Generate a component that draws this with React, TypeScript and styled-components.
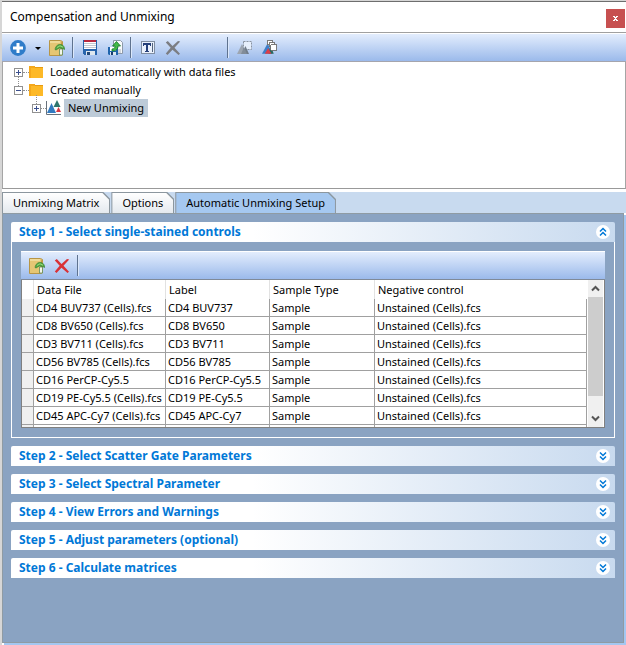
import React, { useState } from "react";
import styled, { createGlobalStyle, css } from "styled-components";

const GlobalStyle = createGlobalStyle`
  *, *::before, *::after { box-sizing: border-box; }
  body { margin: 0; background: #fff; }
  body, button, table {
    font-family: "Noto Sans", "Open Sans", sans-serif;
    font-size: 11px;
    line-height: 18px;
    color: #000;
  }
  button { margin: 0; padding: 0; border: 0; background: none; }
`;

const Window = styled.main`
  display: flex;
  flex-direction: column;
  min-height: 100vh;
  border-left: 2px solid #d6d6d6;
  border-top: 1px solid #d6d6d6;
  background: #fff;
`;

const TitleBar = styled.header`
  display: flex;
  justify-content: space-between;
  align-items: center;
  height: 32px;
  padding-left: 8px;
  border-top: 1px solid #6e6e6e;
  border-bottom: 1px solid #a0a0a0;
`;

const Title = styled.h1`
  margin: 0;
  font-size: 12px;
  font-weight: 400;
`;

const CloseButton = styled.button`
  display: flex;
  align-items: center;
  justify-content: center;
  width: 19px;
  height: 19px;
  margin-right: 1px;
  margin-top: 3px;
  background: #c75050;
`;

const Toolbar = styled.div`
  display: flex;
  align-items: center;
  height: 29px;
  padding-left: 8px;
  border-top: 1px solid #fff;
  border-bottom: 1px solid #a5a5ad;
  background: linear-gradient(#e3edfd, #9bbaeb);
`;

const GridToolbar = styled(Toolbar)`
  border-bottom-color: #808a98;
`;

const ToolButton = styled.button<{ $gap?: number }>`
  display: flex;
  width: 16px;
  height: 16px;
  margin-right: ${(p) => p.$gap ?? 9}px;
`;

const Separator = styled.span`
  width: 2px;
  height: 21px;
  margin-right: 8px;
  border-left: 1px solid #5f738f;
  border-right: 1px solid #dbe8fb;
`;

const Spacer = styled.span`
  width: 37px;
`;

const TreePane = styled.section`
  height: 127px;
  padding: 1px 0 0 11px;
  border: 1px solid #a5a5a5;
  border-top: 0;
  border-bottom-color: #999;
`;

const TreeList = styled.ul<{ $nested?: boolean }>`
  margin: 0;
  padding: 0 0 0 ${(p) => (p.$nested ? "18px" : "0")};
  list-style: none;
`;

const TreeRow = styled.div`
  display: flex;
  align-items: center;
  height: 18px;
`;

const Expander = styled.button<{ $linkDown?: boolean; $linkUp?: boolean }>`
  position: relative;
  display: flex;
  width: 9px;
  height: 9px;

  ${(p) =>
    (p.$linkDown || p.$linkUp) &&
    css`
      &::after {
        content: "";
        position: absolute;
        left: 4px;
        ${p.$linkDown ? "top: 9px;" : "bottom: 9px;"}
        height: 9px;
        border-left: 1px dotted #909090;
      }
    `}
`;

const Dots = styled.span<{ $short?: boolean }>`
  width: ${(p) => (p.$short ? "5px" : "6px")};
  border-top: 1px dotted #909090;
`;

const TreeLabel = styled.span<{ $selected?: boolean }>`
  margin-left: 2px;
  padding: 0 4px;
  background: ${(p) => (p.$selected ? "#bdcbd8" : "transparent")};
`;

const TabBar = styled.div`
  display: flex;
  height: 21px;
  margin-top: 3px;
  gap: 1px;
  background: #c8daef;
`;

const tabShape = css`
  clip-path: polygon(0 0, calc(100% - 7px) 0, 100% 7px, 100% 100%, 0 100%);
`;

const Tab = styled.button<{ $active?: boolean }>`
  position: relative;
  z-index: 0;
  padding: 2px 11px 1px;
  background: #8c979f;
  ${tabShape}

  &::before {
    content: "";
    position: absolute;
    z-index: -1;
    inset: 1px 1px 0 1px;
    background: ${(p) => (p.$active ? "#a5c8f0" : "linear-gradient(#fff, #e4e9ee)")};
    ${tabShape}
  }
`;

const Panel = styled.div`
  display: flex;
  flex-direction: column;
  flex: 1;
  gap: 8px;
  margin: 0 2px 2px 0;
  padding: 8px 8px 8px 8px;
  border: 1px solid #8f9ba3;
  background: #8aa3c2;
  box-shadow: 2px 2px 0 #a3c7f1;
`;

const StepHeading = styled.h2`
  margin: 0;
`;

const StepButton = styled.button`
  display: flex;
  align-items: center;
  justify-content: space-between;
  width: 100%;
  height: 20px;
  padding: 0 5px 0 8px;
  border-radius: 2px 2px 0 0;
  background: linear-gradient(90deg, #fff 40%, #c8daef);
  font-size: 12px;
  font-weight: 700;
  color: #0078d7;
`;

const StepBody = styled.div`
  padding: 9px;
  border: 1px solid #fff;
  border-top: 0;
`;

const GridFrame = styled.div`
  display: flex;
  height: 148px;
  border: 1px solid #808080;
  border-top: 0;
  background: #fff;
`;

const GridView = styled.div`
  flex: 1;
  overflow: hidden;
  padding-right: 1px;
`;

const Grid = styled.table`
  width: 100%;
  table-layout: fixed;
  border-collapse: separate;
  border-spacing: 0;
`;

const Col = styled.col<{ $width?: number }>`
  width: ${(p) => (p.$width ? `${p.$width}px` : "auto")};
`;

const HeadCell = styled.th`
  height: 19px;
  padding: 0 3px;
  border-right: 1px solid #e2e2e2;
  font-weight: 400;
  text-align: left;
  white-space: nowrap;

  &:last-child { border-right-color: transparent; }
`;

const Cell = styled.td`
  height: 18px;
  padding: 0 2px;
  border-right: 1px solid #a0a0a0;
  border-bottom: 1px solid #a0a0a0;
  line-height: 17px;
  white-space: nowrap;
`;

const RowHead = styled(Cell)`
  background: #f0f0f0;
`;

const ScrollTrack = styled.div`
  display: flex;
  flex-direction: column;
  width: 16px;
  padding-right: 1px;
  background: linear-gradient(90deg, #f0f0f0 15px, #fff 15px);
`;

const ScrollButton = styled.button`
  display: flex;
  align-items: center;
  justify-content: center;
  height: 17px;
`;

const ScrollThumb = styled.div`
  height: 99px;
  margin-bottom: auto;
  background: #cdcdcd;
`;

const PlusIcon = () => (
  <svg width="16" height="16" viewBox="0 0 16 16">
    <circle cx="8" cy="8" r="7.900" fill="#2f7cc9" />
    <path d="M8 3v10M3 8h10" stroke="#fff" strokeWidth="3" />
  </svg>
);

const CaretIcon = () => (
  <svg width="16" height="16" viewBox="0 0 16 16">
    <path d="M0 7h6L3 10z" fill="#000" />
  </svg>
);

const ImportIcon = () => (
  <svg width="16" height="16" viewBox="0 0 16 16">
    <path d="M.5 .5h11l2 1v13l-2 1H.5z" fill="#e5c674" stroke="#b79546" />
    <path d="M1 1h10v2H1z" fill="#f0da98" />
    <path d="M12 2l2 1v12l-2 .5z" fill="#c49b45" />
    <path d="M10.500 15V9h3v6z" fill="#f3f6e9" stroke="#628b55" strokeWidth=".8" />
    <path d="M6 9.500C6.500 6 9 4 12 4.500 14.500 5 15.500 7 15.700 9.500L13.500 8.500l-3.200-.5L7 10z" fill="#54a944" stroke="#287b2b" strokeWidth=".6" />
    <path d="M8 7.500l3-1.700 3 1.400" stroke="#9bd77f" fill="none" />
  </svg>
);

const SaveIcon = () => (
  <svg width="16" height="16" viewBox="0 0 16 16" shapeRendering="crispEdges">
    <path d="M1 0h14v15H2l-1-1z" fill="#2764ad" />
    <path d="M2 0h12v9H2z" fill="#fff" />
    <path d="M2 0h12v2H2z" fill="#b92a40" />
    <path d="M2 3h12M2 5h12M2 7h12" stroke="#c3c8d0" transform="translate(0 .5)" />
    <path d="M4 11h9v4H4z" fill="#dfe7ee" />
    <path d="M5 12h3v3H5z" fill="#244878" />
  </svg>
);

const ExportIcon = () => (
  <svg width="16" height="16" viewBox="0 0 16 16">
    <path d="M6.500 .5h7l2 2v11h-9z" fill="#f7f9fb" stroke="#8d99aa" />
    <path d="M11 10h3M11 12h3" stroke="#aab3be" />
    <path d="M1 7h10v8H2l-1-1z" fill="#1f64ad" />
    <path d="M3 7h6v4H3z" fill="#fff" />
    <path d="M3 12h6v3H3z" fill="#dbe7ef" />
    <path d="M4 12h2v3H4z" fill="#183d70" />
    <path d="M5 11C9.500 11 11 9 11 6H13.500L9.500 1.500 5.500 6H8C8 8 7 9 5 9z" fill="#43b947" stroke="#14772d" strokeWidth=".8" />
  </svg>
);

const RenameIcon = () => (
  <svg width="16" height="16" viewBox="0 0 16 16" shapeRendering="crispEdges">
    <path d="M1.500 1.500h13v12h-13z" fill="#eaf1fc" stroke="#7f8da1" />
    <path d="M3 3h8v3h-1V5H8v6h1v1H5v-1h1V5H4v1H3z" fill="#253f79" />
    <path d="M12.500 3v9" stroke="#53647e" />
  </svg>
);

const CrossIcon = ({ red }: { red?: boolean }) => (
  <svg width="16" height="16" viewBox="0 0 16 16">
    <path
      d="M.8 2.500L2.800 1 7.500 6 13 1l2.200.5L9.500 7.700 15 13.800 13.500 15 7.500 9.700 2.500 15 .8 13.500 5.700 7.800z"
      fill={red ? "#d93136" : "#7b7d82"}
    />
  </svg>
);

const GateIcon = () => (
  <svg width="16" height="16" viewBox="0 0 16 16">
    <path d="M0 14L5 4l5 10z" fill="#9ca5b1" />
    <path d="M6.500 1.500h8v8h-8z" fill="#e6effc" stroke="#8993a1" strokeDasharray="2 1" />
    <path d="M5 14l3.500-8 3.500 8z" fill="#707c8a" />
    <path d="M4 14l3-7 3 7z" fill="#818c99" />
  </svg>
);

const GateStackIcon = () => (
  <svg width="17" height="16" viewBox="0 0 17 16">
    <path d="M0 14L6 3l5 11z" fill="#3d7fc9" />
    <path d="M7 14l2-9 3.500 9z" fill="#27695e" />
    <g fill="#fff" stroke="#737373" shapeRendering="crispEdges">
      <path d="M5.500 .5h6v4h-6z" />
      <path d="M7.500 2.500h6v4h-6z" />
      <path d="M9.500 4.500h6v6h-6z" />
    </g>
    <path d="M3 14l3.500-6L10 14z" fill="#dc3e48" />
  </svg>
);

const BoxIcon = ({ open }: { open?: boolean }) => (
  <svg width="9" height="9" viewBox="0 0 9 9" shapeRendering="crispEdges">
    <path d="M.5 .5h8v8h-8z" fill="#fff" stroke="#919191" />
    <path d={open ? "M2 4.500h5" : "M2 4.500h5M4.500 2v5"} stroke="#3b4f8d" />
  </svg>
);

const FolderIcon = () => (
  <svg width="15" height="14" viewBox="0 0 15 14" shapeRendering="crispEdges">
    <path d="M0 1h6v1h8v11H0z" fill="#fdb927" />
    <path d="M0 1h6v2H2v10H0z" fill="#f5a81c" />
    <path d="M6 2h8v1H6z" fill="#e79b11" />
  </svg>
);

const MatrixIcon = () => (
  <svg width="16" height="16" viewBox="0 0 16 16">
    <path d="M1 13L5.500 3 10 13z" fill="#327ac0" />
    <path d="M7.500 7L11 0l3.500 7z" fill="#2d756d" />
    <path d="M10 12l2.500-5 2.500 5z" fill="#da3844" />
    <path d="M.5 1v13.500H15" stroke="#68727c" fill="none" />
  </svg>
);

const ChevronBadge = ({ up }: { up?: boolean }) => (
  <svg width="14" height="14" viewBox="0 0 14 14">
    <circle cx="7" cy="7" r="7" fill="#fff" />
    <path
      d={up ? "M4 6.500l3-3 3 3M4 10.500l3-3 3 3" : "M4 3.500l3 3 3-3M4 7.500l3 3 3-3"}
      fill="none"
      stroke="#0078d7"
      strokeWidth="1.500"
    />
  </svg>
);

const ScrollArrow = ({ down }: { down?: boolean }) => (
  <svg width="9" height="7" viewBox="0 0 9 7">
    <path d={down ? "M1 1.500l3.500 3.500L8 1.500" : "M1 5.500L4.500 2 8 5.500"} fill="none" stroke="#555" strokeWidth="2" />
  </svg>
);

const CloseIcon = () => (
  <svg width="5" height="5" viewBox="0 0 5 5" shapeRendering="crispEdges">
    <path d="M0 0h2v1h1V0h2v1H4v1H3v1h1v1h1v1H3V4H2v1H0V4h1V3h1V2H1V1H0z" fill="#fff" />
  </svg>
);

const controls = [
  ["CD4 BUV737 (Cells).fcs", "CD4 BUV737"],
  ["CD8 BV650 (Cells).fcs", "CD8 BV650"],
  ["CD3 BV711 (Cells).fcs", "CD3 BV711"],
  ["CD56 BV785 (Cells).fcs", "CD56 BV785"],
  ["CD16 PerCP-Cy5.5", "CD16 PerCP-Cy5.5"],
  ["CD19 PE-Cy5.5 (Cells).fcs", "CD19 PE-Cy5.5"],
  ["CD45 APC-Cy7 (Cells).fcs", "CD45 APC-Cy7"],
];

const steps = [
  "Step 1 - Select single-stained controls",
  "Step 2 - Select Scatter Gate Parameters",
  "Step 3 - Select Spectral Parameter",
  "Step 4 - View Errors and Warnings",
  "Step 5 - Adjust parameters (optional)",
  "Step 6 - Calculate matrices",
];

const tabs = ["Unmixing Matrix", "Options", "Automatic Unmixing Setup"];

const ControlsTable = () => (
  <StepBody>
    <GridToolbar>
      <ToolButton aria-label="Add controls">
        <ImportIcon />
      </ToolButton>
      <ToolButton aria-label="Remove control" $gap={7}>
        <CrossIcon red />
      </ToolButton>
      <Separator />
    </GridToolbar>
    <GridFrame>
      <GridView>
        <Grid>
          <colgroup>
            <Col $width={12} />
            <Col $width={132} />
            <Col $width={104} />
            <Col $width={105} />
            <Col />
          </colgroup>
          <thead>
            <tr>
              <HeadCell aria-label="Row" />
              <HeadCell>Data File</HeadCell>
              <HeadCell>Label</HeadCell>
              <HeadCell>Sample Type</HeadCell>
              <HeadCell>Negative control</HeadCell>
            </tr>
          </thead>
          <tbody>
            {controls.map(([file, label]) => (
              <tr key={file}>
                <RowHead />
                <Cell>{file}</Cell>
                <Cell>{label}</Cell>
                <Cell>Sample</Cell>
                <Cell>Unstained (Cells).fcs</Cell>
              </tr>
            ))}
            <tr>
              <RowHead />
              <Cell />
              <Cell />
              <Cell />
              <Cell />
            </tr>
          </tbody>
        </Grid>
      </GridView>
      <ScrollTrack>
        <ScrollButton aria-label="Scroll up">
          <ScrollArrow />
        </ScrollButton>
        <ScrollThumb />
        <ScrollButton aria-label="Scroll down">
          <ScrollArrow down />
        </ScrollButton>
      </ScrollTrack>
    </GridFrame>
  </StepBody>
);

export default function App() {
  const [openStep, setOpenStep] = useState(0);
  const [activeTab, setActiveTab] = useState(2);

  return (
    <Window>
      <GlobalStyle />
      <TitleBar>
        <Title>Compensation and Unmixing</Title>
        <CloseButton aria-label="Close">
          <CloseIcon />
        </CloseButton>
      </TitleBar>
      <Toolbar>
        <ToolButton aria-label="New">
          <PlusIcon />
        </ToolButton>
        <ToolButton aria-label="New options" $gap={-2}>
          <CaretIcon />
        </ToolButton>
        <ToolButton aria-label="Import" $gap={7}>
          <ImportIcon />
        </ToolButton>
        <Separator />
        <ToolButton aria-label="Save">
          <SaveIcon />
        </ToolButton>
        <ToolButton aria-label="Export" $gap={7}>
          <ExportIcon />
        </ToolButton>
        <Separator />
        <ToolButton aria-label="Rename">
          <RenameIcon />
        </ToolButton>
        <ToolButton aria-label="Delete">
          <CrossIcon />
        </ToolButton>
        <Spacer />
        <Separator />
        <ToolButton aria-label="Apply to selection">
          <GateIcon />
        </ToolButton>
        <ToolButton aria-label="Apply to all">
          <GateStackIcon />
        </ToolButton>
      </Toolbar>
      <TreePane aria-label="Matrices">
        <TreeList>
          <li>
            <TreeRow>
              <Expander aria-label="Expand" $linkDown>
                <BoxIcon />
              </Expander>
              <Dots />
              <FolderIcon />
              <TreeLabel>Loaded automatically with data files</TreeLabel>
            </TreeRow>
          </li>
          <li>
            <TreeRow>
              <Expander aria-label="Collapse">
                <BoxIcon open />
              </Expander>
              <Dots />
              <FolderIcon />
              <TreeLabel>Created manually</TreeLabel>
            </TreeRow>
            <TreeList $nested>
              <li>
                <TreeRow>
                  <Expander aria-label="Expand" $linkUp>
                    <BoxIcon />
                  </Expander>
                  <Dots $short />
                  <MatrixIcon />
                  <TreeLabel $selected>New Unmixing</TreeLabel>
                </TreeRow>
              </li>
            </TreeList>
          </li>
        </TreeList>
      </TreePane>
      <TabBar role="tablist">
        {tabs.map((name, i) => (
          <Tab
            key={name}
            role="tab"
            aria-selected={i === activeTab}
            $active={i === activeTab}
            onClick={() => setActiveTab(i)}
          >
            {name}
          </Tab>
        ))}
      </TabBar>
      <Panel>
        {steps.map((title, i) => (
          <section key={title}>
            <StepHeading>
              <StepButton aria-expanded={i === openStep} onClick={() => setOpenStep(i === openStep ? -1 : i)}>
                {title}
                <ChevronBadge up={i === openStep} />
              </StepButton>
            </StepHeading>
            {i === 0 && openStep === 0 && <ControlsTable />}
          </section>
        ))}
      </Panel>
    </Window>
  );
}
